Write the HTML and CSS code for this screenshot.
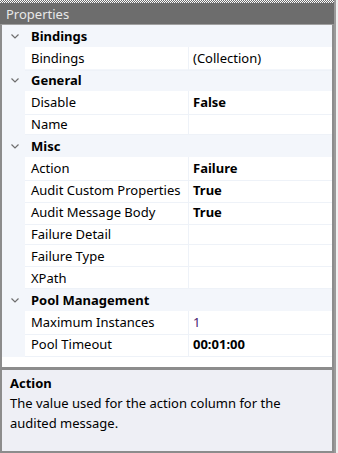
FILE: index.html
```html
<!DOCTYPE html>
<html lang="en">
<head>
    <meta charset="UTF-8">
    <meta name="viewport" content="width=device-width, initial-scale=1.0">
    <title>Properties</title>
    <link rel="stylesheet" href="styles.css">
</head>
<body>
    <div class="window">
        <div class="grip"></div>
        <div class="title">Properties</div>
        <div class="grid">
            <div class="row category"><span class="toggle"><svg width="8" height="5" viewBox="0 0 8 5"><polyline points="0.5,0.5 4,4 7.5,0.5" /></svg></span><span class="name">Bindings</span></div>
            <div class="row"><span class="toggle"></span><span class="name">Bindings</span><span class="value">(Collection)</span></div>
            <div class="row category"><span class="toggle"><svg width="8" height="5" viewBox="0 0 8 5"><polyline points="0.5,0.5 4,4 7.5,0.5" /></svg></span><span class="name">General</span></div>
            <div class="row"><span class="toggle"></span><span class="name">Disable</span><span class="value bold">False</span></div>
            <div class="row"><span class="toggle"></span><span class="name">Name</span><span class="value"></span></div>
            <div class="row category"><span class="toggle"><svg width="8" height="5" viewBox="0 0 8 5"><polyline points="0.5,0.5 4,4 7.5,0.5" /></svg></span><span class="name">Misc</span></div>
            <div class="row"><span class="toggle"></span><span class="name">Action</span><span class="value bold">Failure</span></div>
            <div class="row"><span class="toggle"></span><span class="name">Audit Custom Properties</span><span class="value bold">True</span></div>
            <div class="row"><span class="toggle"></span><span class="name">Audit Message Body</span><span class="value bold">True</span></div>
            <div class="row"><span class="toggle"></span><span class="name">Failure Detail</span><span class="value"></span></div>
            <div class="row"><span class="toggle"></span><span class="name">Failure Type</span><span class="value"></span></div>
            <div class="row"><span class="toggle"></span><span class="name">XPath</span><span class="value"></span></div>
            <div class="row category"><span class="toggle"><svg width="8" height="5" viewBox="0 0 8 5"><polyline points="0.5,0.5 4,4 7.5,0.5" /></svg></span><span class="name">Pool Management</span></div>
            <div class="row"><span class="toggle"></span><span class="name">Maximum Instances</span><span class="value number">1</span></div>
            <div class="row"><span class="toggle"></span><span class="name">Pool Timeout</span><span class="value bold">00:01:00</span></div>
        </div>
        <div class="help">
            <div class="help-title">Action</div>
            <div class="help-text">The value used for the action column for the audited message.</div>
        </div>
    </div>
</body>
</html>
```

FILE: styles.css
```css
body {
    margin: 0;
    font-family: "Noto Sans", sans-serif;
    font-size: 13px;
    color: #000;
    background: #f0f0f0;
}
.window {
    width: 336px;
    height: 453px;
    display: flex;
    flex-direction: column;
    border-right: 2px solid #9a9a9a;
    box-sizing: border-box;
}
.grip {
    height: 3px;
    background: repeating-conic-gradient(#6d6d6d 0 25%, #ffffff 0 50%) 0 0 / 2px 2px;
}
.title {
    height: 21px;
    line-height: 22px;
    padding-left: 6px;
    background: #6d6d6d;
    color: #e8e8e8;
    font-size: 13px;
}
.grid {
    flex: 1;
    background: #fff;
    border-left: 2px solid #8c8c8c;
    border-right: 2px solid #8c8c8c;
    border-top: 1px solid #a0a0a0;
}
.row {
    display: grid;
    grid-template-columns: 23px 163px 1fr;
    height: 22px;
    line-height: 23px;
}
.row .toggle {
    background: #f3f6fb;
    display: flex;
    align-items: center;
    justify-content: center;
    padding-left: 2px;
}
.toggle svg polyline {
    fill: none;
    stroke: #6e6e6e;
    stroke-width: 1.2;
}
.row .name {
    padding-left: 6px;
    white-space: nowrap;
    overflow: hidden;
    border-bottom: 1px solid #eef2f8;
}
.row .value {
    padding-left: 4px;
    border-left: 1px solid #eef2f8;
    border-bottom: 1px solid #eef2f8;
}
.category {
    background: #f3f6fb;
    font-weight: bold;
}
.category .name {
    grid-column: 2 / 4;
    border-bottom: none;
}
.bold {
    font-weight: bold;
}
.number {
    color: #4b1a6e;
}
.help {
    height: 86px;
    background: #eeeff5;
    border: 2px solid #8c8c8c;
    border-top-width: 3px;
    padding: 3px 8px 0;
    box-sizing: border-box;
}
.help-title {
    font-weight: bold;
    line-height: 20px;
}
.help-text {
    line-height: 20px;
}
```
